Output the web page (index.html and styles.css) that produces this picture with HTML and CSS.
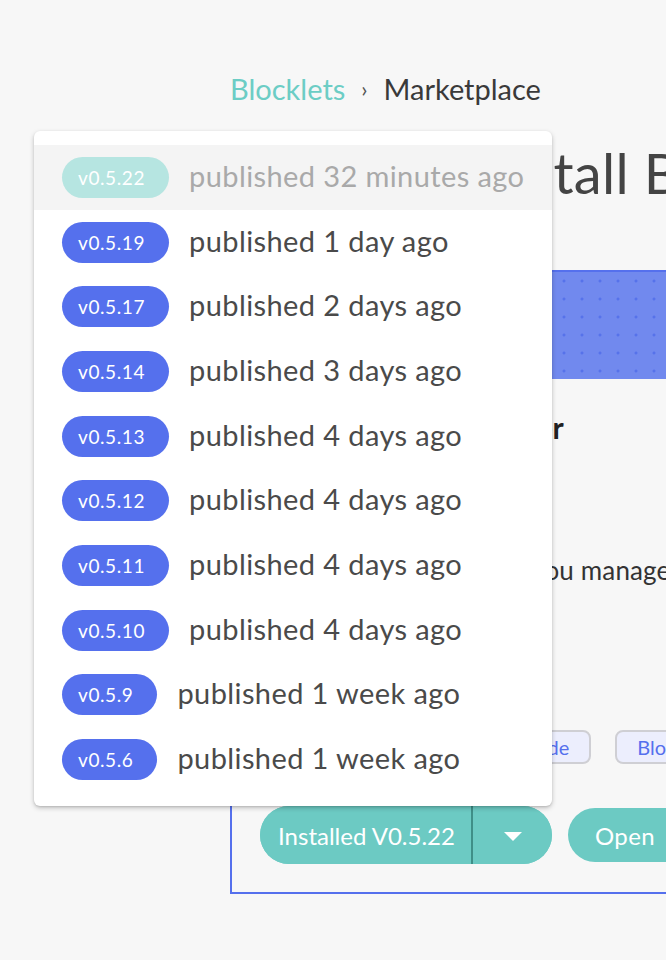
FILE: index.html
```html
<!DOCTYPE html>
<html lang="en">
<head>
<meta charset="utf-8">
<title>Blocklets Marketplace</title>
<link rel="stylesheet" href="styles.css">
</head>
<body>
<div class="page">
  <nav class="crumbs">
    <a class="crumb-link" href="#">Blocklets</a>
    <span class="crumb-sep">›</span>
    <span class="crumb-current">Marketplace</span>
  </nav>
  <h1 class="title">One-click Install Blocklets</h1>
  <section class="card">
    <div class="banner"></div>
    <div class="card-body">
      <h2 class="card-title">Blocklet Hub Launcher</h2>
      <p class="card-desc">A dashboard that helps you manage your blocklets</p>
      <div class="tags">
        <span class="tag">Dashboard</span>
        <span class="tag">Blocklet Node</span>
        <span class="tag">Blocklet</span>
      </div>
      <div class="actions">
        <div class="split">
          <button class="split-main">Installed V0.5.22</button>
          <button class="split-arrow" aria-label="versions"><span class="caret"></span></button>
        </div>
        <button class="btn-open">Open</button>
      </div>
    </div>
  </section>
</div>

<ul class="menu">
  <li class="item item-current"><span class="badge badge-current">v0.5.22</span><span class="when">published 32 minutes ago</span></li>
  <li class="item"><span class="badge">v0.5.19</span><span class="when">published 1 day ago</span></li>
  <li class="item"><span class="badge">v0.5.17</span><span class="when">published 2 days ago</span></li>
  <li class="item"><span class="badge">v0.5.14</span><span class="when">published 3 days ago</span></li>
  <li class="item"><span class="badge">v0.5.13</span><span class="when">published 4 days ago</span></li>
  <li class="item"><span class="badge">v0.5.12</span><span class="when">published 4 days ago</span></li>
  <li class="item"><span class="badge">v0.5.11</span><span class="when">published 4 days ago</span></li>
  <li class="item"><span class="badge">v0.5.10</span><span class="when">published 4 days ago</span></li>
  <li class="item"><span class="badge">v0.5.9</span><span class="when">published 1 week ago</span></li>
  <li class="item"><span class="badge">v0.5.6</span><span class="when">published 1 week ago</span></li>
</ul>
</body>
</html>
```

FILE: styles.css
```css
html, body {
  margin: 0;
  padding: 0;
  overflow: hidden;
}
body {
  background: #f7f7f7;
  font-family: Lato, "Open Sans", sans-serif;
  color: #444;
  width: 666px;
  height: 960px;
  position: relative;
}
.page {
  padding: 70px 0 0 230px;
  width: 900px;
}
.crumbs {
  display: flex;
  align-items: center;
  gap: 16px;
  font-size: 29px;
  line-height: 38px;
}
.crumb-link {
  color: #6ccdc5;
  text-decoration: none;
}
.crumb-sep {
  color: #555;
  font-size: 22px;
}
.crumb-current {
  color: #3a3a3a;
}
.title {
  margin: 29px 0 0 0;
  font-size: 56px;
  font-weight: 400;
  line-height: 72px;
  color: #444;
  white-space: nowrap;
  letter-spacing: 0.3px;
}
.card {
  margin-top: 61px;
  width: 640px;
  border: 2px solid #5570ed;
  background: #f7f7f7;
}
.banner {
  height: 107px;
  background-color: #7189ee;
  background-image: radial-gradient(circle at 9px 9px, #5672ea 1.2px, transparent 1.8px);
  background-size: 18px 18px;
  background-position: -1px 0;
}
.card-body {
  padding: 28px 0 28px 28px;
}
.card-title {
  margin: 0;
  font-size: 30px;
  font-weight: 700;
  color: #222;
  line-height: 40px;
  white-space: nowrap;
}
.card-desc {
  margin: 107px 0 0 0;
  font-size: 26px;
  color: #333;
  line-height: 32px;
  letter-spacing: 0.15px;
  white-space: nowrap;
}
.tags {
  display: flex;
  gap: 24px;
  margin-top: 144px;
}
.tag {
  height: 30px;
  line-height: 30px;
  padding: 0 20px;
  border: 2px solid #cfcfd4;
  border-radius: 8px;
  background: #eceefd;
  color: #5570ed;
  font-size: 20px;
}
.actions {
  display: flex;
  align-items: center;
  gap: 16px;
  margin-top: 42px;
}
.split {
  display: flex;
  height: 58px;
  border-radius: 29px;
  background: #6ccac3;
  overflow: hidden;
}
.split-main, .split-arrow, .btn-open {
  border: 0;
  background: #6ccac3;
  color: #fff;
  font-family: inherit;
  font-size: 24px;
  padding: 0;
  cursor: pointer;
}
.split-main {
  width: 213px;
  padding-left: 2px;
  border-right: 2px solid #3f8f88;
}
.split-arrow {
  width: 79px;
  display: flex;
  align-items: center;
  justify-content: center;
}
.caret {
  width: 0;
  height: 0;
  border-left: 9px solid transparent;
  border-right: 9px solid transparent;
  border-top: 9px solid #fff;
  margin-top: 2px;
}
.btn-open {
  height: 54px;
  border-radius: 27px;
  padding: 0 27px;
  width: 130px;
  text-align: left;
  letter-spacing: 0.4px;
}
.menu {
  position: absolute;
  left: 34px;
  top: 131px;
  width: 518px;
  margin: 0;
  padding: 14px 0;
  list-style: none;
  background: #fff;
  border-radius: 6px;
  box-shadow: 0 2px 5px rgba(0, 0, 0, 0.22), 0 1px 2px rgba(0, 0, 0, 0.1);
}
.item {
  height: 64.7px;
  display: flex;
  align-items: center;
  padding-left: 28px;
  gap: 20px;
}
.item-current {
  background: #f4f4f4;
}
.badge {
  height: 41px;
  line-height: 41px;
  border-radius: 21px;
  padding: 0 24px 0 16px;
  background: #5570ed;
  color: #fff;
  font-size: 19px;
  letter-spacing: 0.6px;
}
.badge-current {
  background: #b6e5e1;
}
.when {
  font-size: 29px;
  line-height: 34px;
  letter-spacing: 0.4px;
  color: #4a4a4a;
  white-space: nowrap;
  margin-top: -3px;
}
.item-current .when {
  color: #a9a9a9;
}
```
